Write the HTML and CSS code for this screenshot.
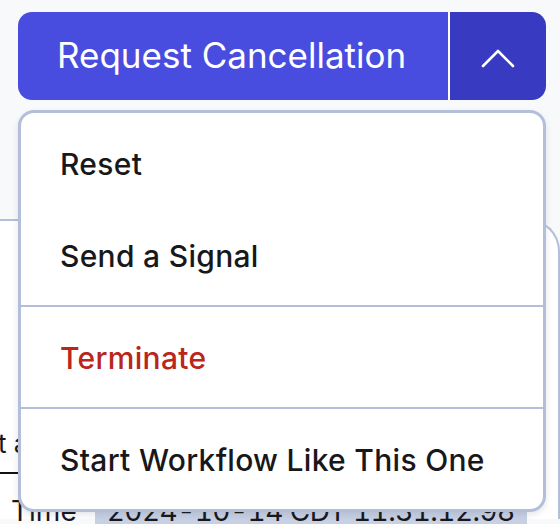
FILE: index.html
```html
<!DOCTYPE html>
<html lang="en">
<head>
<meta charset="utf-8">
<title>Workflow actions</title>
<link rel="stylesheet" href="styles.css">
</head>
<body>
<div class="page">
  <div class="split">
    <button class="split-main" type="button">Request Cancellation</button>
    <button class="split-toggle" type="button" aria-label="Toggle menu">
      <svg width="34" height="20" viewBox="0 0 34 20" aria-hidden="true"><polyline points="2,18 17,3 32,18" fill="none" stroke="#fff" stroke-width="2.6" stroke-linecap="round" stroke-linejoin="round"/></svg>
    </button>
  </div>

  <div class="card">
    <div class="card-head"><span class="card-title">t a</span></div>
    <div class="time-row">
      <span class="time-label">Time</span>
      <span class="time-value">2024-10-14 CDT 11:31:12.98</span>
    </div>
  </div>

  <ul class="menu" role="menu">
    <li class="menu-group">
      <div class="menu-item">Reset</div>
      <div class="menu-item">Send a Signal</div>
    </li>
    <li class="menu-group">
      <div class="menu-item danger">Terminate</div>
    </li>
    <li class="menu-group">
      <div class="menu-item">Start Workflow Like This One</div>
    </li>
  </ul>
</div>
</body>
</html>
```

FILE: styles.css
```css
* { box-sizing: border-box; }

html, body {
  margin: 0;
  padding: 0;
  background: #f8f9fb;
  font-family: "Inter", "Noto Sans", sans-serif;
  color: #18181b;
  overflow: hidden;
}

.page {
  position: relative;
  width: 560px;
  height: 524px;
  overflow: hidden;
  padding-top: 12px;
}

.split {
  display: flex;
  margin-left: 18px;
  width: 528px;
  height: 88px;
  border-radius: 14px;
  overflow: hidden;
}

.split-main {
  flex: 1;
  border: none;
  margin: 0;
  background: #484de0;
  color: #fff;
  font-family: inherit;
  font-size: 35px;
  font-weight: 400;
  text-align: left;
  padding: 0 0 2px 39px;
  border-right: 2px solid #fff;
}

.split-toggle {
  width: 96px;
  border: none;
  margin: 0;
  padding: 0;
  background: #383ac2;
  display: flex;
  align-items: center;
  justify-content: center;
}

.split-toggle svg { display: block; margin-top: 3px; }

.card {
  margin-top: 119px;
  margin-left: -30px;
  width: 590px;
  height: 300px;
  background: #fff;
  border-top: 2px solid #b3bfd9;
  border-right: 2px solid #b3bfd9;
  border-top-right-radius: 32px;
  padding: 207px 0 0 28px;
}

.card-head {
  display: flex;
}

.card-title {
  display: inline-block;
  font-size: 26px;
  font-weight: 400;
  line-height: 32px;
  padding-bottom: 12px;
  padding-right: 60px;
  border-bottom: 2px solid #111;
  color: #18181b;
}

.time-row {
  display: flex;
  gap: 18px;
  margin-top: 20px;
  margin-left: 13px;
  font-size: 28px;
  line-height: 34px;
}

.time-value {
  background: #c8d1e4;
  padding: 0 12px;
  font-variant-numeric: tabular-nums;
  letter-spacing: -0.55px;
}

.menu {
  position: absolute;
  top: 110px;
  left: 18px;
  width: 528px;
  margin: 0;
  padding: 0;
  list-style: none;
  background: #fff;
  border: 3px solid #b3bfd9;
  border-radius: 16px;
  box-shadow: 0 3px 6px rgba(40, 50, 80, 0.12);
}

.menu-group {
  padding: 4px 0;
}

.menu-group + .menu-group {
  border-top: 2px solid #b3bfd9;
}

.menu-item {
  height: 92px;
  display: flex;
  align-items: center;
  padding: 2px 0 0 39px;
  font-size: 30px;
  font-weight: 500;
  letter-spacing: 0.3px;
  color: #18181b;
}

.menu-item.danger {
  color: #b9261c;
}
```
